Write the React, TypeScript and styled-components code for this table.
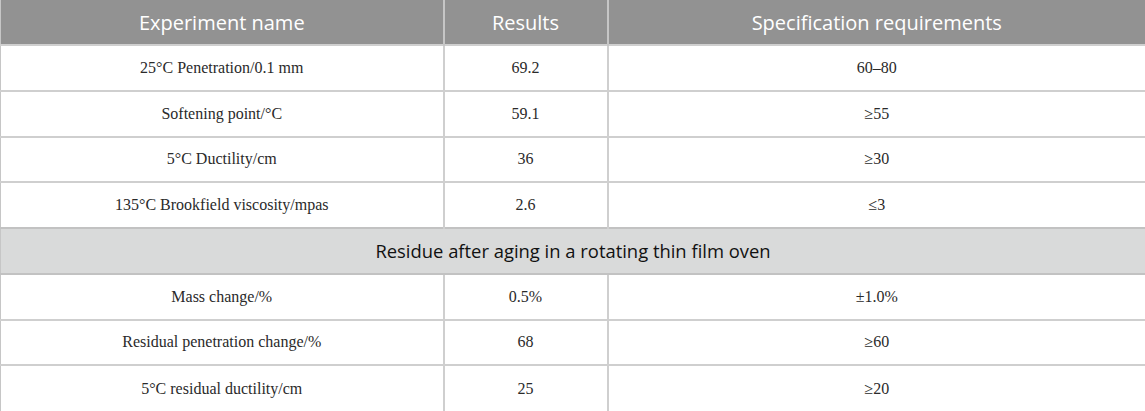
import React from "react";
import styled, { createGlobalStyle } from "styled-components";

const Global = createGlobalStyle`
  html, body { margin: 0; padding: 0; background: #fff; }
`;

const Table = styled.table`
  width: 1145px;
  border-collapse: collapse;
  table-layout: fixed;
  border-left: 1px solid #c6c6c6;
  border-right: 1px solid #c6c6c6;
`;

const HeadCell = styled.th<{ $w: number }>`
  width: ${(p) => p.$w}px;
  height: 45px;
  box-sizing: border-box;
  padding: 0 8px;
  background: #929292;
  color: #fff;
  font-family: "Open Sans", "Noto Sans", sans-serif;
  font-weight: 400;
  font-size: 20px;
  text-align: center;
  border-left: 2px solid #c6c6c6;
  &:first-child { border-left: none; }
`;

const Cell = styled.td`
  height: 45.75px;
  box-sizing: border-box;
  padding: 0 8px;
  text-align: center;
  font-family: "Liberation Serif", "Times New Roman", serif;
  font-size: 16px;
  color: #2a2a2a;
  border-top: 2px solid #cfcfcf;
  border-left: 2px solid #cfcfcf;
  &:first-child { border-left: none; }
`;

const SectionCell = styled.td`
  height: 45.75px;
  box-sizing: border-box;
  padding: 0 8px;
  text-align: center;
  background: #d9dada;
  font-family: "Open Sans", "Noto Sans", sans-serif;
  font-size: 18.4px;
  color: #111;
  border-top: 2px solid #c2c2c2;
  border-bottom: 2px solid #c2c2c2;
`;

const rowsA = [
  ["25°C Penetration/0.1 mm", "69.2", "60–80"],
  ["Softening point/°C", "59.1", "≥55"],
  ["5°C Ductility/cm", "36", "≥30"],
  ["135°C Brookfield viscosity/mpas", "2.6", "≤3"],
];
const rowsB = [
  ["Mass change/%", "0.5%", "±1.0%"],
  ["Residual penetration change/%", "68", "≥60"],
  ["5°C residual ductility/cm", "25", "≥20"],
];

export default function App() {
  return (
    <>
      <Global />
      <Table>
        <thead>
          <tr>
            <HeadCell $w={443}>Experiment name</HeadCell>
            <HeadCell $w={164}>Results</HeadCell>
            <HeadCell $w={538}>Specification requirements</HeadCell>
          </tr>
        </thead>
        <tbody>
          {rowsA.map((r) => (
            <tr key={r[0]}>
              {r.map((c, i) => (
                <Cell key={i}>{c}</Cell>
              ))}
            </tr>
          ))}
          <tr>
            <SectionCell colSpan={3}>Residue after aging in a rotating thin film oven</SectionCell>
          </tr>
          {rowsB.map((r) => (
            <tr key={r[0]}>
              {r.map((c, i) => (
                <Cell key={i}>{c}</Cell>
              ))}
            </tr>
          ))}
        </tbody>
      </Table>
    </>
  );
}
